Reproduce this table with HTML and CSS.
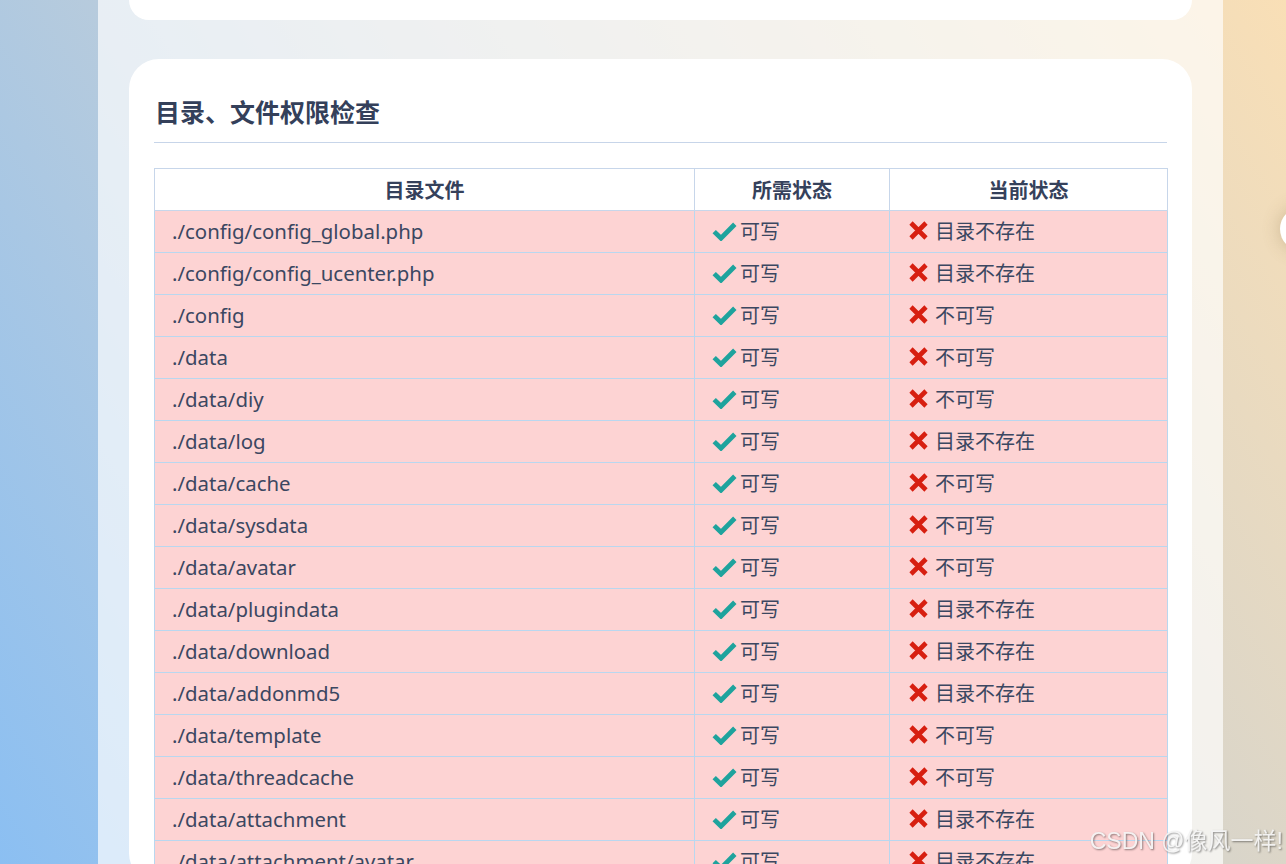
FILE: index.html
```html
<!DOCTYPE html>
<html lang="zh-CN">
<head>
<meta charset="utf-8">
<title>目录、文件权限检查</title>
<link rel="stylesheet" href="styles.css">
</head>
<body>
<div class="wrap">
  <div class="card card-prev"></div>
  <section class="card">
    <h2 class="card-title">目录、文件权限检查</h2>
    <table class="perm">
      <colgroup>
        <col class="c-file"><col class="c-need"><col class="c-cur">
      </colgroup>
      <thead>
        <tr><th>目录文件</th><th>所需状态</th><th>当前状态</th></tr>
      </thead>
      <tbody id="rows"></tbody>
    </table>
  </section>
</div>
<div class="float-btn"></div>
<div class="watermark">CSDN @像风一样!</div>
<script src="app.js"></script>
</body>
</html>
```

FILE: app.js
```js
const rows = [
  ["./config/config_global.php", "目录不存在"],
  ["./config/config_ucenter.php", "目录不存在"],
  ["./config", "不可写"],
  ["./data", "不可写"],
  ["./data/diy", "不可写"],
  ["./data/log", "目录不存在"],
  ["./data/cache", "不可写"],
  ["./data/sysdata", "不可写"],
  ["./data/avatar", "不可写"],
  ["./data/plugindata", "目录不存在"],
  ["./data/download", "目录不存在"],
  ["./data/addonmd5", "目录不存在"],
  ["./data/template", "不可写"],
  ["./data/threadcache", "不可写"],
  ["./data/attachment", "目录不存在"],
  ["./data/attachment/avatar", "目录不存在"]
];
const ok = '<svg class="ico-ok" viewBox="0 0 25 20" width="25" height="20"><path d="M2.2 10.6 L9 17.2 L22.8 3.2" fill="none" stroke="#1ea39d" stroke-width="4.8" stroke-linejoin="miter"/></svg>';
const no = '<svg class="ico-no" viewBox="0 0 21 21" width="21" height="21"><path d="M3 3 L18 18 M18 3 L3 18" fill="none" stroke="#d71f10" stroke-width="4.6"/></svg>';
const tb = document.getElementById("rows");
tb.innerHTML = rows.map(r =>
  `<tr><td>${r[0]}</td><td><span class="st">${ok}<span>可写</span></span></td><td><span class="st st-no">${no}<span>${r[1]}</span></span></td></tr>`
).join("");
```

FILE: styles.css
```css
html, body {
  margin: 0;
  padding: 0;
  height: 100%;
  overflow: hidden;
}
body {
  background: linear-gradient(57deg, #8bbff2 0%, #c9d0d4 50%, #f9dfb6 100%) fixed;
  font-family: "Noto Sans", "Noto Sans CJK SC", sans-serif;
  color: #3b4761;
}
.wrap {
  margin-left: 98px;
  width: 1125px;
  box-sizing: border-box;
  padding: 0 31px;
  min-height: 100%;
  background: rgba(255, 255, 255, 0.68);
}
.card {
  background: #fff;
  border-radius: 30px;
  padding: 34px 25px 0;
  margin-bottom: 39px;
}
.card-prev {
  height: 20px;
  padding: 0;
  border-radius: 0 0 30px 30px;
}
.card-title {
  margin: 0 0 25px;
  font-size: 25px;
  line-height: 36px;
  font-weight: 700;
  color: #34405a;
  padding: 0 0 13px 1px;
  border-bottom: 1px solid #c7d5e9;
  font-family: "Noto Sans CJK SC", sans-serif;
}
.perm {
  width: 100%;
  border-collapse: collapse;
  table-layout: fixed;
  font-size: 20.4px;
}
.c-file { width: 540px; }
.c-need { width: 195px; }
.c-cur { width: 278px; }
.perm th {
  height: 41px;
  padding: 0;
  border: 1px solid #c7d6ea;
  font-weight: 700;
  background: #fff;
  text-align: center;
  color: #35415b;
  font-family: "Noto Sans CJK SC", sans-serif;
  font-size: 20px;
}
.perm td {
  height: 41px;
  padding: 0 0 0 17px;
  border: 1px solid #b9d7ef;
  background: #fdd3d3;
  line-height: 1;
  white-space: nowrap;
}
.perm td:nth-child(2) { padding-left: 17px; }
.perm td:nth-child(3) { padding-left: 18px; }
.st {
  display: inline-flex;
  align-items: center;
  gap: 3px;
  padding-top: 1px;
  font-family: "Noto Sans CJK SC", sans-serif;
  font-size: 20px;
}
.st-no { gap: 6px; }
.st svg { display: block; }
.float-btn {
  position: fixed;
  top: 207px;
  right: -38px;
  width: 44px;
  height: 44px;
  border-radius: 50%;
  background: #fff;
  box-shadow: 0 0 18px rgba(120, 100, 60, 0.3);
}
.watermark {
  position: fixed;
  right: 3px;
  bottom: 8px;
  font-family: "Liberation Sans", "Noto Sans CJK SC", sans-serif;
  font-size: 23px;
  color: #f4f4f4;
  text-shadow: 1px 1px 2px rgba(0, 0, 0, 0.5);
  opacity: 0.9;
}
```
